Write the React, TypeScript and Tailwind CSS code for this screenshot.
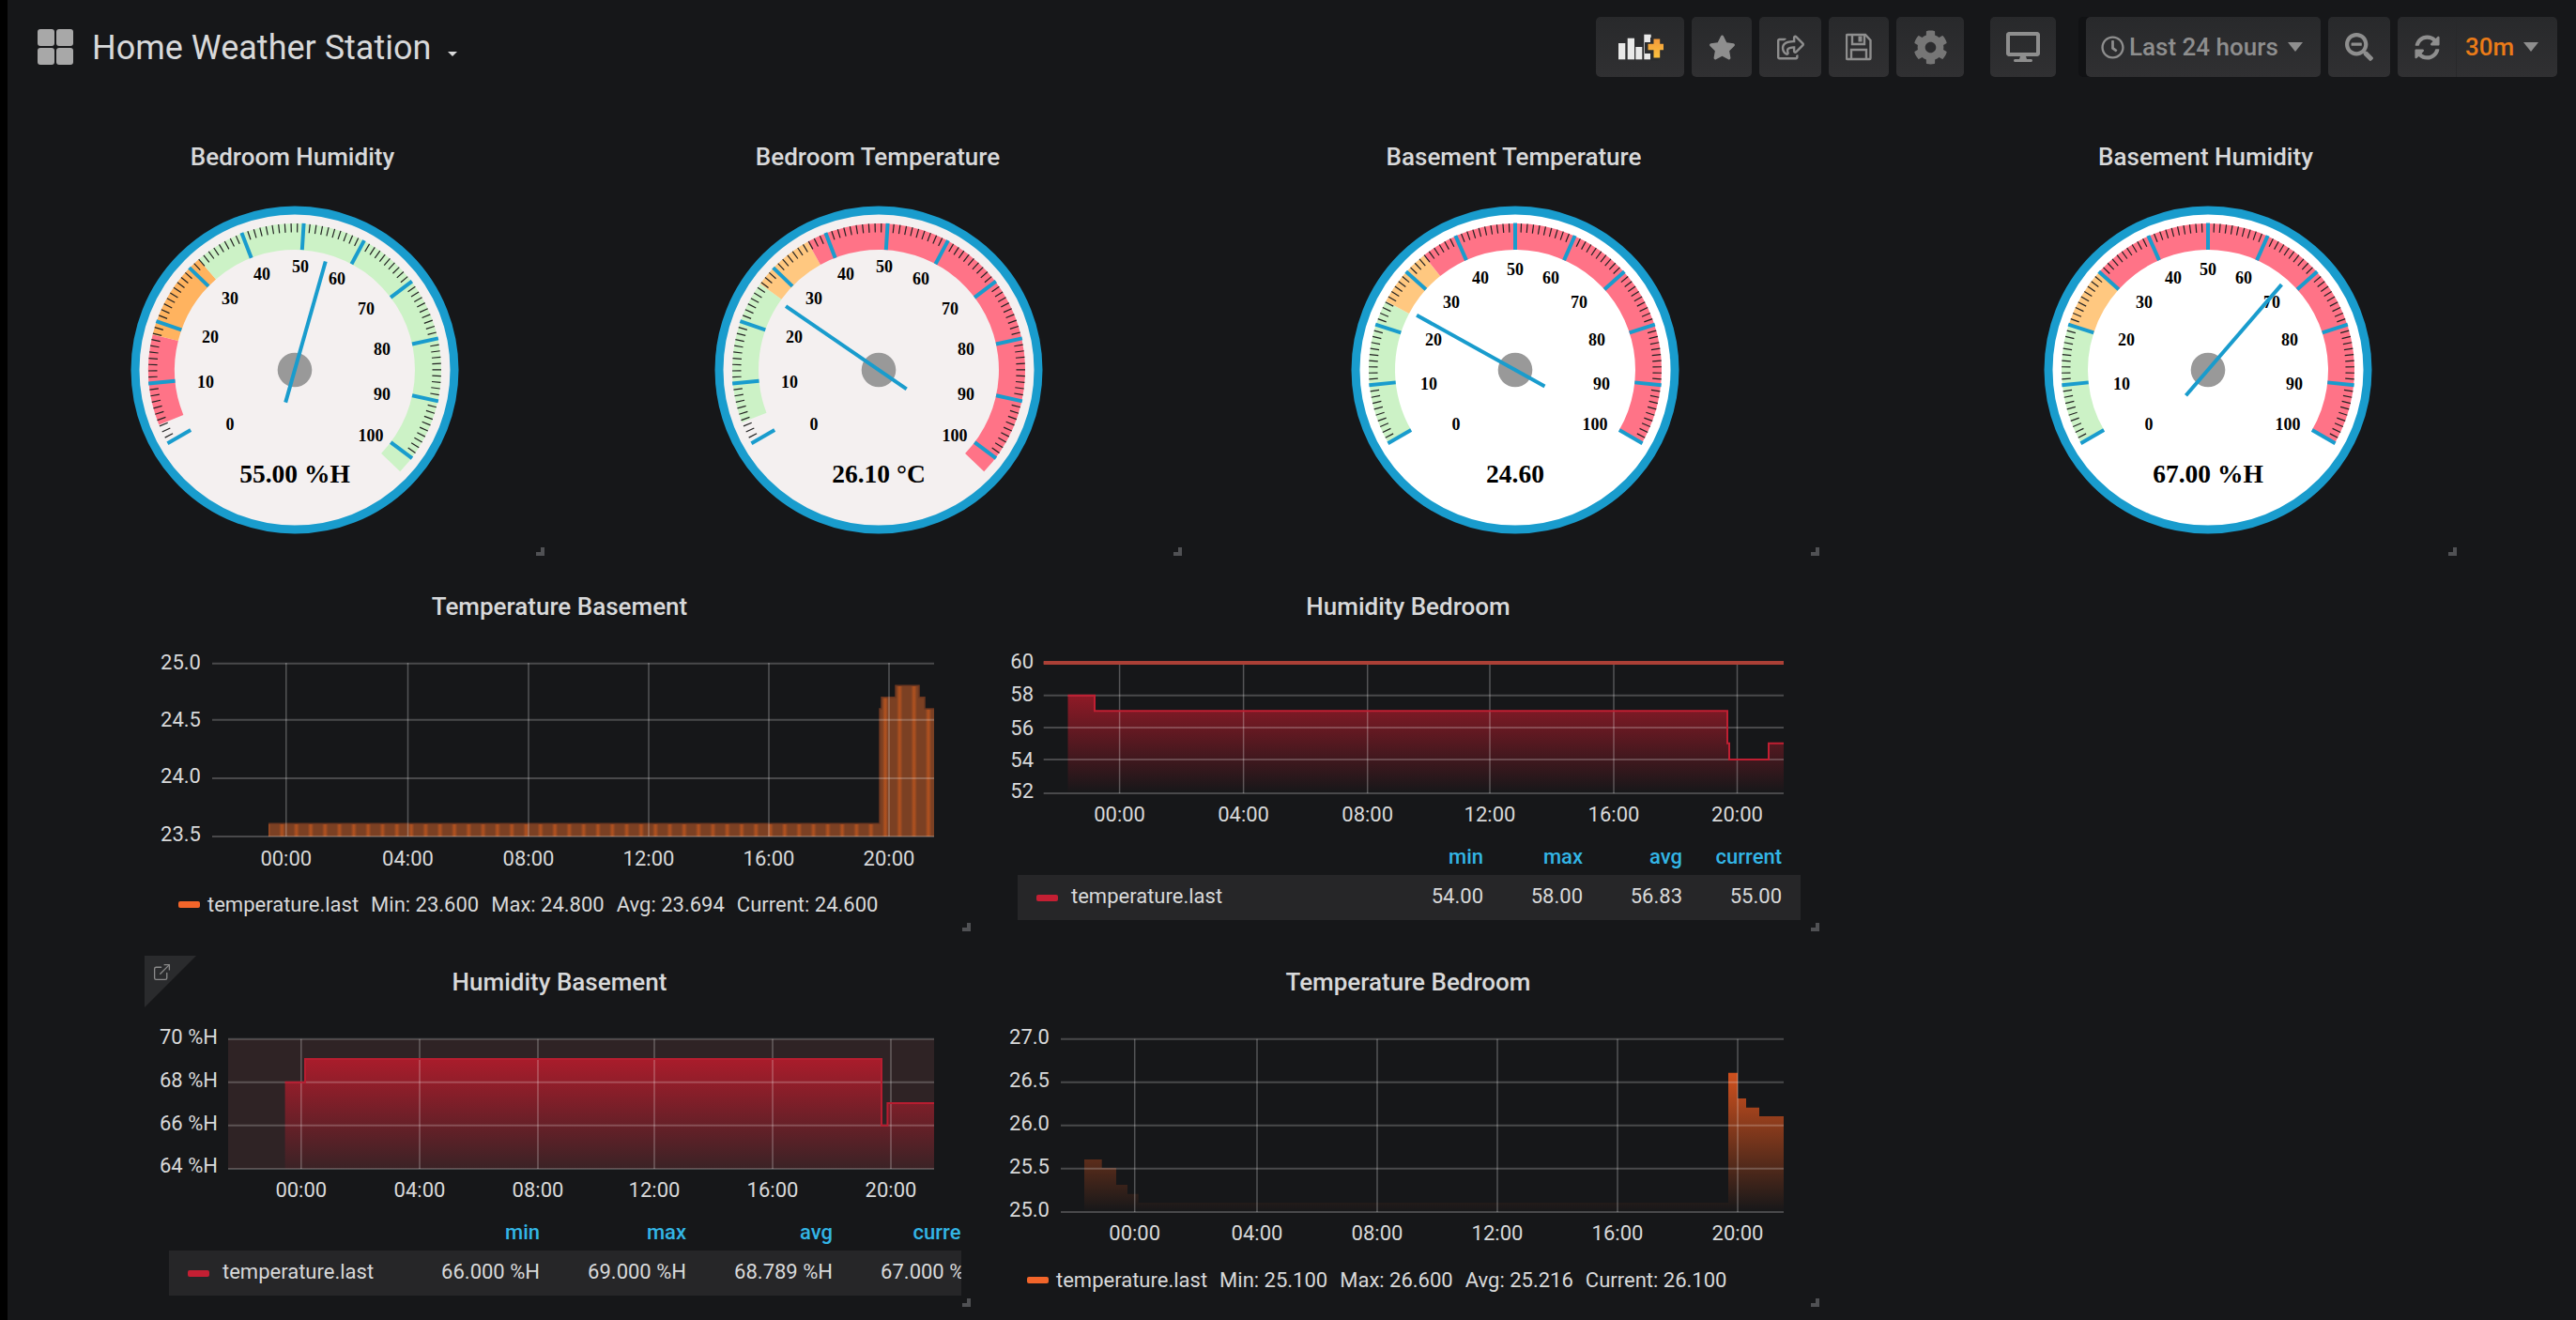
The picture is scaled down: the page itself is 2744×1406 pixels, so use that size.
import React from "react";
import {
  FaStar,
  FaRegShareSquare,
  FaCog,
  FaDesktop,
  FaRegClock,
  FaSearchMinus,
  FaSyncAlt,
} from "react-icons/fa";
import { ExternalLink } from "lucide-react";

const BLUE = "#199ccd";

function polar(cx: number, cy: number, r: number, deg: number): [number, number] {
  const a = (deg * Math.PI) / 180;
  return [cx + r * Math.sin(a), cy - r * Math.cos(a)];
}

function sector(cx: number, cy: number, r0: number, r1: number, a0: number, a1: number) {
  const [x0, y0] = polar(cx, cy, r1, a0);
  const [x1, y1] = polar(cx, cy, r1, a1);
  const [x2, y2] = polar(cx, cy, r0, a1);
  const [x3, y3] = polar(cx, cy, r0, a0);
  const large = a1 - a0 > 180 ? 1 : 0;
  return `M${x0} ${y0}A${r1} ${r1} 0 ${large} 1 ${x1} ${y1}L${x2} ${y2}A${r0} ${r0} 0 ${large} 0 ${x3} ${y3}Z`;
}

const LABELS_TILT: [number, number][] = [
  [-69, 58], [-95, 13], [-90, -35], [-69, -76], [-35, -102], [6, -110],
  [45, -97], [76, -65], [93, -22], [93, 26], [81, 70],
];
const LABELS_FLAT: [number, number][] = [
  [-63, 58], [-92, 15], [-87, -32], [-68, -72], [-37, -98], [0, -107],
  [38, -98], [68, -72], [87, -32], [92, 15], [85, 58],
];

type Band = { from: number; to: number; color: string };

function Gauge({
  value,
  text,
  face,
  step,
  bands,
  labels,
}: {
  value: number;
  text: string;
  face: string;
  step: number;
  bands: Band[];
  labels: [number, number][];
}) {
  const c = 180;
  const start = -120;
  const angle = (v: number) => start + (v / 10) * step;
  const needle = angle(value);
  const [tx, ty] = polar(c, c, 120, needle);
  const [bx, by] = polar(c, c, -36, needle);
  const ticks = [] as React.ReactNode[];
  for (let v = 0; v <= 100; v++) {
    if (v % 10 === 0) continue;
    const [x0, y0] = polar(c, c, 146.5, angle(v));
    const [x1, y1] = polar(c, c, 156, angle(v));
    ticks.push(<line key={v} x1={x0} y1={y0} x2={x1} y2={y1} stroke="#222222" strokeWidth={1.2} />);
  }
  const majors = [] as React.ReactNode[];
  for (let v = 0; v <= 100; v += 10) {
    const [x0, y0] = polar(c, c, 128, angle(v));
    const [x1, y1] = polar(c, c, 156.5, angle(v));
    majors.push(<line key={v} x1={x0} y1={y0} x2={x1} y2={y1} stroke={BLUE} strokeWidth={4} />);
  }
  return (
    <svg width={360} height={360} viewBox="0 0 360 360" className="block">
      <circle cx={c} cy={c} r={170} fill={face} stroke={BLUE} strokeWidth={9} />
      {bands.map((b, i) => (
        <path key={i} d={sector(c, c, 128, 156, b.from, b.to)} fill={b.color} />
      ))}
      {ticks}
      {majors}
      <g fontFamily="'Liberation Serif', serif" fontWeight={700} fontSize={18} fill="#000" textAnchor="middle" dominantBaseline="central">
        {labels.map(([dx, dy], i) => (
          <text key={i} x={c + dx} y={c + dy}>
            {i * 10}
          </text>
        ))}
      </g>
      <text
        x={c}
        y={c + 110}
        fontFamily="'Liberation Serif', serif"
        fontWeight={700}
        fontSize={27.5}
        fill="#000"
        textAnchor="middle"
        dominantBaseline="central"
      >
        {text}
      </text>
      <circle cx={c} cy={c} r={18.3} fill="#999999" />
      <line x1={bx} y1={by} x2={tx} y2={ty} stroke={BLUE} strokeWidth={4} />
    </svg>
  );
}

function Handle() {
  return (
    <div className="absolute right-0 bottom-0 w-[9px] h-[9px] border-r-[4px] border-b-[4px] border-[#505154]" />
  );
}

function GaugePanel({
  title,
  width,
  className,
  titleShift,
  children,
}: {
  title: string;
  width: string;
  className: string;
  titleShift: string;
  children: React.ReactNode;
}) {
  return (
    <section className={`relative flex flex-col items-center h-[452px] ${width} ${className}`}>
      <h2 className={`h-[52px] leading-[55px] text-[26px] font-medium text-[#d8d9da] ${titleShift}`}>{title}</h2>
      <div className="mt-[22px]">{children}</div>
      <Handle />
    </section>
  );
}

type Tick = { label: string; at: number; ly?: number };

function stepPath(steps: [number, number][], bottom: number) {
  let d = `M${steps[0][0]} ${bottom}`;
  for (let i = 0; i < steps.length - 1; i++) {
    d += `L${steps[i][0]} ${steps[i][1]}L${steps[i + 1][0]} ${steps[i][1]}`;
  }
  d += `L${steps[steps.length - 1][0]} ${bottom}Z`;
  return d;
}
function stepLine(steps: [number, number][]) {
  let d = `M${steps[0][0]} ${steps[0][1]}`;
  for (let i = 0; i < steps.length - 1; i++) {
    d += `L${steps[i + 1][0]} ${steps[i][1]}`;
    if (i < steps.length - 2) d += `L${steps[i + 1][0]} ${steps[i + 1][1]}`;
  }
  return d;
}

function Chart({
  left,
  top,
  width,
  height,
  plot,
  yTicks,
  xTicks,
  xLabelY,
  yRight,
  under,
  over,
}: {
  left: number;
  top: number;
  width: number;
  height: number;
  plot: { x0: number; x1: number; y0: number; y1: number };
  yTicks: Tick[];
  xTicks: Tick[];
  xLabelY: number;
  yRight: number;
  under?: React.ReactNode;
  over?: React.ReactNode;
}) {
  return (
    <svg width={width} height={height} viewBox={`${left} ${top} ${width} ${height}`} className="block">
      {under}
      {yTicks.map((t) => (
        <line key={t.label} x1={plot.x0} x2={plot.x1} y1={t.at} y2={t.at} stroke="#ffffff" strokeOpacity={0.22} strokeWidth={2} />
      ))}
      {xTicks.map((t) => (
        <line key={t.label} x1={t.at} x2={t.at} y1={plot.y0} y2={plot.y1} stroke="#ffffff" strokeOpacity={0.27} strokeWidth={1.5} />
      ))}
      {over}
      <g fontFamily="Roboto, sans-serif" fontSize={22} fill="#d8d9da">
        {yTicks.map((t) => (
          <text key={t.label} x={yRight} y={t.ly ?? t.at} textAnchor="end" dominantBaseline="central">
            {t.label}
          </text>
        ))}
        {xTicks.map((t) => (
          <text key={t.label} x={t.at} y={xLabelY} textAnchor="middle" dominantBaseline="central">
            {t.label}
          </text>
        ))}
      </g>
    </svg>
  );
}

function InlineLegend({ stats }: { stats: string[] }) {
  return (
    <div className="flex items-center h-[57px] pl-[32px] text-[22px] text-[#d8d9da]">
      <span className="w-[23px] h-[7px] rounded-[2px] bg-[#f2652a] mr-[8px]" />
      <span>temperature.last</span>
      {stats.map((s) => (
        <span key={s} className="ml-[13px]">
          {s}
        </span>
      ))}
    </div>
  );
}

function TableLegend({
  marginLeft,
  visible,
  inner,
  col,
  values,
}: {
  marginLeft: string;
  visible: string;
  inner: string;
  col: string;
  values: string[];
}) {
  const heads = ["min", "max", "avg", "current"];
  return (
    <div className={`${marginLeft} ${visible} overflow-hidden text-[22px]`}>
      <div className={`${inner} flex items-center justify-end h-[42px] pt-[2px] pr-[20px] font-medium text-[#33b5e5]`}>
        {heads.map((h) => (
          <span key={h} className={`${col} shrink-0 text-right`}>
            {h}
          </span>
        ))}
      </div>
      <div className={`${visible} bg-[#262628]`}>
        <div className={`${inner} flex items-center h-[48px] pb-[4px] pl-[20px] pr-[20px] text-[#d8d9da]`}>
          <span className="w-[23px] h-[7px] rounded-[2px] bg-[#c41f33] mr-[14px] mt-[4px]" />
          <span className="flex-1">temperature.last</span>
          {values.map((v, i) => (
            <span key={i} className={`${col} shrink-0 text-right whitespace-pre`}>
              {v}
            </span>
          ))}
        </div>
      </div>
    </div>
  );
}

function Btn({ className, children }: { className: string; children: React.ReactNode }) {
  return (
    <div className={`flex items-center h-[64px] rounded-[5px] bg-linear-to-b from-[#28292b] to-[#303032] ${className}`}>
      {children}
    </div>
  );
}

function Caret({ className }: { className?: string }) {
  return (
    <svg width={16} height={10} viewBox="0 0 16 10" className={className}>
      <polygon points="0,0 16,0 8,10" fill="#8e8e8e" />
    </svg>
  );
}

function Toolbar() {
  return (
    <div className="flex items-center gap-[8px] pr-[20px]">
      <Btn className="w-[94px] justify-center">
        <svg width={50} height={30} viewBox="0 0 50 30">
          <rect x="2" y="11" width="7.3" height="17.3" fill="#e8e8e8" />
          <rect x="11.7" y="5.7" width="7.3" height="22.6" fill="#e8e8e8" />
          <rect x="20.3" y="15" width="7" height="13.3" fill="#e8e8e8" />
          <rect x="29.3" y="1.7" width="7.4" height="26.6" fill="#e8e8e8" />
          <path d="M36.5 10 h6 v-5 h9 v8 h5 v9 h-5 v8 h-9 v-8 h-6z" fill="#2b2c2e" transform="translate(-6.5 0)" />
          <defs>
            <linearGradient id="plus" x1="0" y1="0" x2="0" y2="1">
              <stop offset="0" stopColor="#f29a3a" />
              <stop offset="1" stopColor="#fbc13e" />
            </linearGradient>
          </defs>
          <path d="M40 6.5 h6.7 v5.2 h5.3 v6.6 h-5.3 v8.2 h-6.7 v-8.2 h-6 v-6.6 h6z" fill="url(#plus)" transform="translate(-.5 0)" />
        </svg>
      </Btn>
      <Btn className="w-[64px] justify-center">
        <FaStar size={29} color="#8e8e8e" />
      </Btn>
      <Btn className="w-[66px] justify-center">
        <FaRegShareSquare size={29} color="#8e8e8e" />
      </Btn>
      <Btn className="w-[64px] justify-center">
        <svg width={28} height={30} viewBox="0 0 28 30" fill="none" stroke="#8e8e8e" strokeWidth="2.4">
          <path d="M2 2h19l5.5 6v19a1 1 0 0 1-1 1H2a1 1 0 0 1-1-1V3a1 1 0 0 1 1-1z" />
          <path d="M7 2v10h13V2" />
          <rect x="13.5" y="3.5" width="4" height="6" fill="#8e8e8e" stroke="none" />
          <path d="M6 28V18h16v10" />
        </svg>
      </Btn>
      <Btn className="w-[72px] justify-center">
        <FaCog size={37} color="#767676" />
      </Btn>
      <Btn className="w-[70px] ml-[20px] justify-center">
        <FaDesktop size={36} color="#8e8e8e" />
      </Btn>
      <Btn className="w-[250px] ml-[24px] shadow-[-8px_0_0_#111214] pl-[16px] pr-[19px] text-[26px] font-medium text-[#8e8e8e]">
        <FaRegClock size={25} color="#8e8e8e" />
        <span className="leading-none ml-[5px]">Last 24 hours</span>
        <Caret className="ml-auto" />
      </Btn>
      <Btn className="w-[66px] justify-center">
        <FaSearchMinus size={30} color="#8e8e8e" />
      </Btn>
      <Btn className="w-[170px]">
        <div className="flex items-center justify-center w-[63px] h-full border-r border-[#28292b]">
          <FaSyncAlt size={27} color="#8e8e8e" />
        </div>
        <div className="flex items-center flex-1 pl-[9px] pr-[20px] justify-between text-[26px] font-medium text-[#eb7b18]">
          <span className="leading-none">30m</span>
          <Caret />
        </div>
      </Btn>
    </div>
  );
}

const T = (labels: string[], ats: number[], lys?: number[]): Tick[] =>
  labels.map((label, i) => ({ label, at: ats[i], ly: lys ? lys[i] : undefined }));
const HOURS = ["00:00", "04:00", "08:00", "12:00", "16:00", "20:00"];
const TITLE = "h-[52px] leading-[53px] text-center text-[26px] font-medium text-[#d8d9da]";

const tempBasementSteps: [number, number][] = [
  [286, 877.3], [937, 755], [939, 742.7], [954, 730.3], [979, 742.7], [985, 755], [995, 755],
];
const humBedroomSteps: [number, number][] = [
  [1137.5, 740.7], [1166, 757.3], [1840, 791.7], [1842, 809], [1884, 791.7], [1900, 791.7],
];
const humBasementSteps: [number, number][] = [
  [303.6, 1152.7], [325, 1128], [939, 1198.7], [945.4, 1175], [995, 1175],
];
const tempBedroomSteps: [number, number][] = [
  [1155, 1235], [1173.7, 1244], [1189, 1262], [1201, 1271.7], [1212.7, 1281], [1841, 1142.7],
  [1851, 1170], [1860, 1179.7], [1874, 1189], [1900, 1189],
];

export default function App() {
  return (
    <div className="flex w-full h-[1406px] overflow-hidden bg-black" style={{ fontFamily: "Roboto, sans-serif" }}>
      <div className="w-[8px] shrink-0 bg-black" />
      <main className="flex-1 flex flex-col bg-[#161719]">
        <header className="flex items-start justify-between h-[140px] pt-[18px]">
          <div className="flex items-center h-[64px] pl-[32px]">
            <svg width={38} height={38} viewBox="0 0 38 38" className="mr-[20px]">
              <rect x="0" y="0" width="18" height="18" rx="3" fill="#a8a8a8" />
              <rect x="20" y="0" width="18" height="18" rx="3" fill="#a8a8a8" />
              <rect x="0" y="20" width="18" height="18" rx="3" fill="#a8a8a8" />
              <rect x="20" y="20" width="18" height="18" rx="3" fill="#a8a8a8" />
            </svg>
            <h1 className="text-[36px] leading-none text-[#d8d9da] mt-[2px]">Home Weather Station</h1>
            <svg width={10} height={5} viewBox="0 0 10 5" className="ml-[18px] mt-[14px]">
              <polygon points="0,0 10,0 5,5" fill="#d8d9da" />
            </svg>
          </div>
          <Toolbar />
        </header>

        <div className="flex h-[452px]">
          <GaugePanel title="Bedroom Humidity" width="w-[532px]" className="ml-[40px]" titleShift="mr-[5px]">
            <Gauge
              value={55}
              text="55.00 %H"
              face="#f4f0f0"
              step={24.7}
              labels={LABELS_TILT}
              bands={[
                { from: -112, to: -76, color: "#ff7387" },
                { from: -76, to: -41, color: "#ffb35f" },
                { from: -41, to: 134, color: "#ccf2c6" },
              ]}
            />
          </GaugePanel>
          <GaugePanel title="Bedroom Temperature" width="w-[646px]" className="ml-[33px]" titleShift="mr-[2px]">
            <Gauge
              value={26.1}
              text="26.10 °C"
              face="#f4f0f0"
              step={24.7}
              labels={LABELS_TILT}
              bands={[
                { from: -111, to: -54, color: "#ccf2c6" },
                { from: -54, to: -29, color: "#ffc880" },
                { from: -29, to: 134, color: "#ff7387" },
              ]}
            />
          </GaugePanel>
          <GaugePanel title="Basement Temperature" width="w-[648px]" className="ml-[31px]" titleShift="mr-[3px]">
            <Gauge
              value={24.6}
              text="24.60"
              face="#ffffff"
              step={24}
              labels={LABELS_FLAT}
              bands={[
                { from: -120, to: -62, color: "#ccf2c6" },
                { from: -62, to: -38.6, color: "#ffc880" },
                { from: -38.6, to: 120, color: "#ff7387" },
              ]}
            />
          </GaugePanel>
          <GaugePanel title="Basement Humidity" width="w-[530px]" className="ml-[149px]" titleShift="mr-[5px]">
            <Gauge
              value={67}
              text="67.00 %H"
              face="#ffffff"
              step={24}
              labels={LABELS_FLAT}
              bands={[
                { from: -120, to: -72, color: "#ccf2c6" },
                { from: -72, to: -48, color: "#ffc880" },
                { from: -48, to: 120, color: "#ff7387" },
              ]}
            />
          </GaugePanel>
        </div>

        <div className="flex gap-[28px] mt-[28px] ml-[150px] h-[372px]">
          <section className="relative w-[876px] h-[372px]">
            <h2 className={TITLE}>Temperature Basement</h2>
            <Chart
              left={158}
              top={672}
              width={876}
              height={263}
              plot={{ x0: 226, x1: 995, y0: 706, y1: 891 }}
              yRight={214}
              yTicks={T(["25.0", "24.5", "24.0", "23.5"], [706.7, 766.7, 829, 891], [705, 766.7, 826.7, 888.3])}
              xTicks={T(HOURS, [304.8, 434.5, 563, 691, 819, 947])}
              xLabelY={914.5}
              under={
                <>
                  <defs>
                    <linearGradient id="stripeG" x1="0" y1="0" x2="1" y2="0">
                      <stop offset="0" stopColor="#b5531f" stopOpacity="0" />
                      <stop offset="0.5" stopColor="#b5531f" stopOpacity="1" />
                      <stop offset="1" stopColor="#b5531f" stopOpacity="0" />
                    </linearGradient>
                    <pattern id="stripes" patternUnits="userSpaceOnUse" x="935.35" y="0" width="15.3" height="10">
                      <rect width="15.3" height="10" fill="#7b4023" />
                      <rect x="4.4" width="6.5" height="10" fill="url(#stripeG)" />
                    </pattern>
                  </defs>
                  <path d={stepPath(tempBasementSteps, 891)} fill="url(#stripes)" />
                  <path d={stepLine(tempBasementSteps)} fill="none" stroke="#6a3620" strokeWidth={1.5} />
                </>
              }
            />
            <InlineLegend stats={["Min: 23.600", "Max: 24.800", "Avg: 23.694", "Current: 24.600"]} />
            <Handle />
          </section>
          <section className="relative w-[876px] h-[372px]">
            <h2 className={TITLE}>Humidity Bedroom</h2>
            <Chart
              left={1062}
              top={672}
              width={876}
              height={218}
              plot={{ x0: 1111.7, x1: 1900, y0: 706, y1: 845 }}
              yRight={1101}
              yTicks={T(["60", "58", "56", "54", "52"], [706, 740.7, 775, 809, 845], [704.3, 739.3, 775, 809, 842.7])}
              xTicks={T(HOURS, [1192.6, 1324.6, 1456.7, 1587, 1719, 1850.5])}
              xLabelY={867.5}
              under={
                <>
                  <defs>
                    <linearGradient id="redA" gradientUnits="userSpaceOnUse" x1="0" y1="740" x2="0" y2="845">
                      <stop offset="0" stopColor="#bf1b2c" stopOpacity="0.72" />
                      <stop offset="1" stopColor="#bf1b2c" stopOpacity="0" />
                    </linearGradient>
                  </defs>
                  <path d={stepPath(humBedroomSteps, 845)} fill="url(#redA)" />
                </>
              }
              over={
                <>
                  <path d={stepLine(humBedroomSteps)} fill="none" stroke="#c01f32" strokeWidth={2} />
                  <line x1={1111.7} x2={1900} y1={706} y2={706} stroke="#ab4036" strokeWidth={4} />
                </>
              }
            />
            <TableLegend
              marginLeft="ml-[22px]"
              visible="w-[834px]"
              inner="w-[834px]"
              col="w-[106px]"
              values={["54.00", "58.00", "56.83", "55.00"]}
            />
            <Handle />
          </section>
        </div>

        <div className="flex gap-[28px] mt-[28px] ml-[150px] h-[372px]">
          <section className="relative w-[876px] h-[372px]">
            <div className="absolute -left-[4px] -top-[2px] w-0 h-0 border-t-[55px] border-r-[55px] border-t-[#2a2b2d] border-r-transparent" />
            <ExternalLink size={21} color="#8a8a8a" strokeWidth={1.5} className="absolute left-[4px] top-[5px]" />
            <h2 className={TITLE}>Humidity Basement</h2>
            <Chart
              left={158}
              top={1072}
              width={876}
              height={218}
              plot={{ x0: 243, x1: 995, y0: 1106.7, y1: 1245 }}
              yRight={232}
              yTicks={T(["70 %H", "68 %H", "66 %H", "64 %H"], [1106.7, 1152.7, 1198.7, 1245], [1104.3, 1150, 1196, 1241.7])}
              xTicks={T(HOURS, [320.8, 447, 573, 697, 823, 949])}
              xLabelY={1267.5}
              under={
                <>
                  <defs>
                    <linearGradient id="redB" gradientUnits="userSpaceOnUse" x1="0" y1="1128" x2="0" y2="1245">
                      <stop offset="0" stopColor="#bf1b2c" stopOpacity="0.85" />
                      <stop offset="1" stopColor="#bf1b2c" stopOpacity="0.08" />
                    </linearGradient>
                  </defs>
                  <rect x={243} y={1106.7} width={752} height={138.3} fill="#2f2325" />
                  <path d={stepPath(humBasementSteps, 1245)} fill="url(#redB)" />
                </>
              }
              over={<path d={stepLine(humBasementSteps)} fill="none" stroke="#b81d30" strokeWidth={2} />}
            />
            <TableLegend
              marginLeft="ml-[22px]"
              visible="w-[844px]"
              inner="w-[883px]"
              col="w-[156px]"
              values={["66.000 %H", "69.000 %H", "68.789 %H", "67.000 %H"]}
            />
            <Handle />
          </section>
          <section className="relative w-[876px] h-[372px]">
            <h2 className={TITLE}>Temperature Bedroom</h2>
            <Chart
              left={1062}
              top={1072}
              width={876}
              height={263}
              plot={{ x0: 1130, x1: 1900, y0: 1106.7, y1: 1291 }}
              yRight={1118}
              yTicks={T(
                ["27.0", "26.5", "26.0", "25.5", "25.0"],
                [1106.7, 1152.7, 1198.7, 1244.7, 1291],
                [1104.3, 1150.7, 1196.7, 1242.7, 1288.3]
              )}
              xTicks={T(HOURS, [1208.7, 1339, 1467, 1595, 1723, 1851])}
              xLabelY={1313.5}
              under={
                <>
                  <defs>
                    <linearGradient id="orangeA" gradientUnits="userSpaceOnUse" x1="0" y1="1142" x2="0" y2="1291">
                      <stop offset="0" stopColor="#ff5f1f" stopOpacity="0.8" />
                      <stop offset="1" stopColor="#ff5f1f" stopOpacity="0" />
                    </linearGradient>
                  </defs>
                  <path d={stepPath(tempBedroomSteps, 1291)} fill="url(#orangeA)" />
                </>
              }
            />
            <InlineLegend stats={["Min: 25.100", "Max: 26.600", "Avg: 25.216", "Current: 26.100"]} />
            <Handle />
          </section>
        </div>
      </main>
    </div>
  );
}
